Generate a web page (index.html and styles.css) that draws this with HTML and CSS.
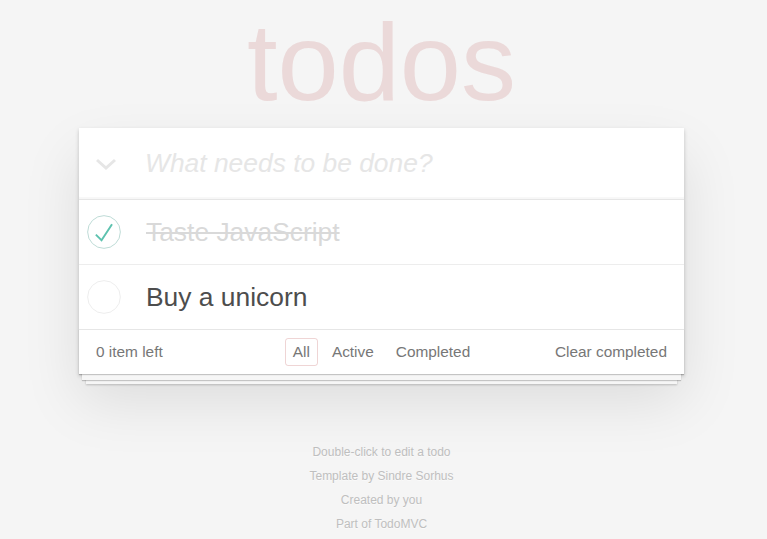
FILE: index.html
```html
<!DOCTYPE html>
<html lang="en">
<head>
<meta charset="utf-8">
<title>Template • TodoMVC</title>
<link rel="stylesheet" href="styles.css">
</head>
<body>
<div class="page">
  <h1 class="title">todos</h1>
  <section class="todoapp">
    <header class="new-row">
      <span class="toggle-all">
        <svg width="22" height="12" viewBox="0 0 22 12"><polyline points="2,2 11,10 20,2" fill="none" stroke="#e6e6e6" stroke-width="3"/></svg>
      </span>
      <span class="new-todo">What needs to be done?</span>
    </header>
    <ul class="todo-list">
      <li class="todo done">
        <svg class="check" width="34" height="34" viewBox="-2 -2 104 104"><circle cx="50" cy="50" r="50" fill="none" stroke="#bddad5" stroke-width="3"/><path fill="#5dc2af" d="M72 25L42 71 27 56l-4 4 20 20 34-52z"/></svg>
        <span class="label">Taste JavaScript</span>
      </li>
      <li class="todo">
        <svg class="check" width="34" height="34" viewBox="-2 -2 104 104"><circle cx="50" cy="50" r="50" fill="none" stroke="#ededed" stroke-width="3"/></svg>
        <span class="label">Buy a unicorn</span>
      </li>
    </ul>
    <footer class="footer">
      <span class="count">0 item left</span>
      <ul class="filters">
        <li><a class="selected">All</a></li>
        <li><a>Active</a></li>
        <li><a>Completed</a></li>
      </ul>
      <span class="clear">Clear completed</span>
    </footer>
  </section>
  <footer class="info">
    <p>Double-click to edit a todo</p>
    <p>Template by Sindre Sorhus</p>
    <p>Created by you</p>
    <p>Part of TodoMVC</p>
  </footer>
</div>
</body>
</html>
```

FILE: styles.css
```css
html, body {
  margin: 0;
  padding: 0;
}
body {
  background: #f5f5f5;
  color: #4d4d4d;
  font-family: "Liberation Sans", Arial, sans-serif;
  font-size: 15.4px;
  line-height: 1.4;
}
.page {
  padding: 0 4px 0 0;
}
.title {
  margin: 0 0 5px;
  height: 123px;
  font-size: 110px;
  line-height: 123px;
  font-weight: normal;
  text-align: center;
  color: #ebd9d9;
}
.todoapp {
  width: 605px;
  margin: 0 auto;
  background: #fff;
  box-shadow: 0 2px 4px 0 rgba(0,0,0,0.2), 0 27px 55px 0 rgba(0,0,0,0.1);
  position: relative;
}
.new-row {
  height: 71px;
  display: flex;
  align-items: center;
  box-shadow: inset 0 -2px 1px rgba(0,0,0,0.03);
}
.toggle-all {
  width: 66px;
  display: flex;
  justify-content: flex-start;
  padding-left: 16px;
  box-sizing: border-box;
}
.toggle-all svg {
  display: block;
  margin-top: 1px;
}
.new-todo {
  font-size: 26.4px;
  font-style: italic;
  color: #e6e6e6;
  line-height: 1;
}
.todo-list {
  list-style: none;
  margin: 0;
  padding: 0;
  border-top: 1px solid #e6e6e6;
}
.todo {
  height: 64px;
  display: flex;
  align-items: center;
  border-bottom: 1px solid #ededed;
}
.todo:last-child {
  border-bottom: none;
}
.check {
  display: block;
  margin-left: 8px;
  flex: none;
}
.label {
  padding: 2px 0 0 25px;
  font-size: 26.4px;
  line-height: 1.2;
  color: #4d4d4d;
}
.done .label {
  color: #d9d9d9;
  text-decoration: line-through;
}
.footer {
  height: 45px;
  box-sizing: border-box;
  border-top: 1px solid #e6e6e6;
  padding: 0 17px 0 17px;
  display: grid;
  grid-template-columns: 1fr auto 1fr;
  align-items: center;
  color: #777;
  box-shadow: 0 1px 1px rgba(0,0,0,0.2),
              0 9px 0 -3px #f6f6f6,
              0 10px 1px -3px rgba(0,0,0,0.2),
              0 17px 0 -7px #f6f6f6,
              0 18px 2px -7px rgba(0,0,0,0.2);
}
.count {
  justify-self: start;
}
.filters {
  list-style: none;
  margin: 0;
  padding: 0;
  display: flex;
  justify-self: center;
}
.filters li {
  margin: 0 3px;
}
.filters a {
  display: block;
  padding: 2px 7px;
  border: 1px solid transparent;
  border-radius: 3px;
  color: inherit;
}
.filters a.selected {
  border-color: rgba(175,47,47,0.2);
}
.clear {
  justify-self: end;
}
.info {
  margin: 72px 0 0;
  text-align: center;
  font-size: 12px;
  line-height: 12px;
  color: #bfbfbf;
  text-shadow: 0 1px 0 rgba(255,255,255,0.5);
}
.info p {
  margin: 0 0 12px;
}
```
